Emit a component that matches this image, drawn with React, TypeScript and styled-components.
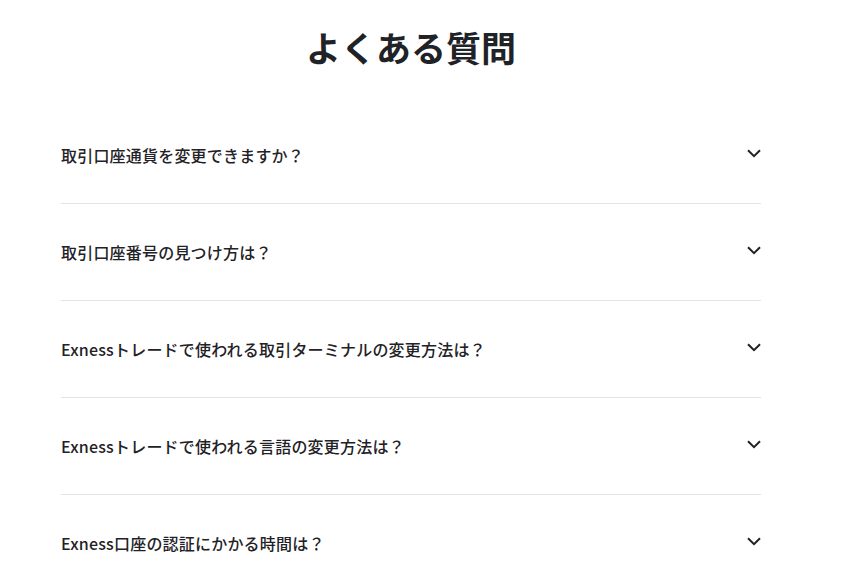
import styled, { createGlobalStyle } from "styled-components";

const GlobalStyle = createGlobalStyle`
  html, body {
    margin: 0;
    padding: 0;
    background: #ffffff;
    font-family: "Noto Sans CJK JP", "Noto Sans", sans-serif;
    color: #1f2226;
  }
`;

const faqs = [
  "取引口座通貨を変更できますか？",
  "取引口座番号の見つけ方は？",
  "Exnessトレードで使われる取引ターミナルの変更方法は？",
  "Exnessトレードで使われる言語の変更方法は？",
  "Exness口座の認証にかかる時間は？",
];

const ChevronDown = () => (
  <svg width="14" height="9" viewBox="0 0 14 9" fill="none">
    <path d="M1 1.2L7 7.2L13 1.2" stroke="#1f2226" strokeWidth="2" />
  </svg>
);

const App = () => {
  return (
    <>
      <GlobalStyle />
      <FaqSection>
        <Title>よくある質問</Title>
        <FaqList>
          {faqs.map((q) => (
            <FaqItem key={q}>
              <Question type="button">
                <span>{q}</span>
                <ChevronDown />
              </Question>
            </FaqItem>
          ))}
        </FaqList>
      </FaqSection>
    </>
  );
};

const FaqSection = styled.section`
  width: 700px;
  margin-left: 61px;
  display: flex;
  flex-direction: column;
`;

const Title = styled.h2`
  margin: 21px 0 34px;
  font-size: 35px;
  line-height: 52px;
  font-weight: 700;
  text-align: center;
  color: #1f2226;
`;

const FaqList = styled.div`
  display: flex;
  flex-direction: column;
`;

const FaqItem = styled.div`
  border-bottom: 1px solid #e3e3e3;
`;

const Question = styled.button`
  width: 100%;
  height: 96px;
  padding: 0;
  border: none;
  background: none;
  display: flex;
  align-items: center;
  justify-content: space-between;
  font-family: inherit;
  font-size: 16px;
  font-weight: 500;
  letter-spacing: 0.2px;
  color: #1f2226;
  text-align: left;
  cursor: pointer;

  svg {
    flex-shrink: 0;
    margin-top: -3px;
  }
`;

export default App;
